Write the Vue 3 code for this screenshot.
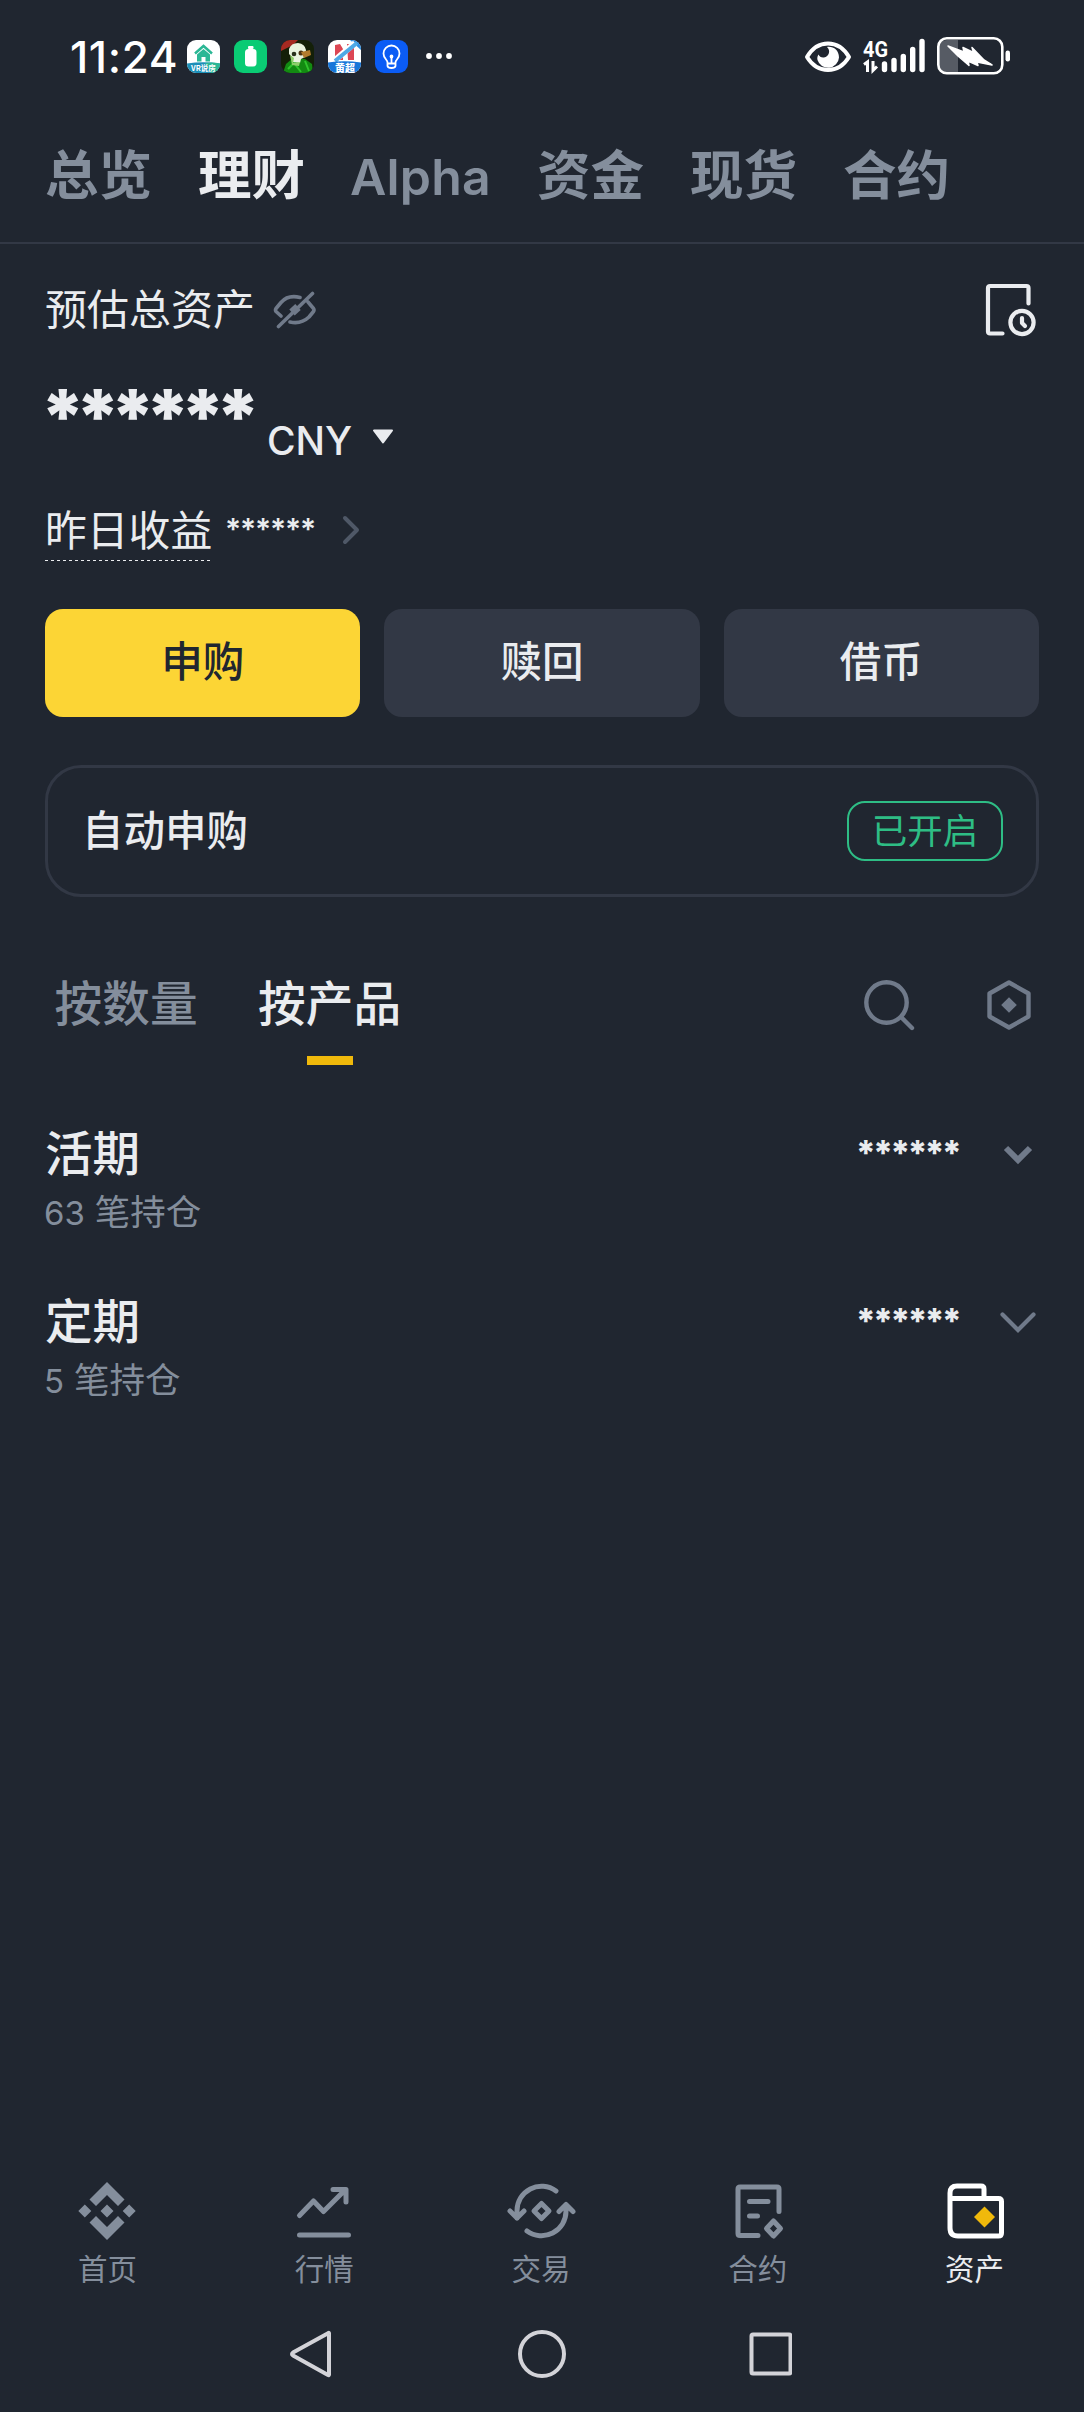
<script setup>
const accountTabs = ['总览', '理财', 'Alpha', '资金', '现货', '合约']
const actions = ['申购', '赎回', '借币']
const holdings = [
  { name: '活期', count: '63', bold: true },
  { name: '定期', count: '5', bold: false },
]
const mask = '******'
</script>

<template>
  <div class="screen">
    <header class="status">
      <span class="time">11:24</span>
      <div class="apps">
        <svg width="33" height="33" viewBox="0 0 33 33">
          <defs><clipPath id="tile"><rect width="33" height="33" rx="9" /></clipPath></defs>
          <g clip-path="url(#tile)">
            <rect width="33" height="33" fill="#fff" />
            <path d="M0 23.500Q16 21 33 23.500V33H0z" fill="#1c8fb8" />
            <path d="M18 23Q26 22 33 23.500V33H24z" fill="#2bb795" />
            <path d="M8 13.500 16.500 6 25 13.500" fill="none" stroke="#2bb795" stroke-width="2.500" />
            <path d="M10 14.500 16.500 9 23 14.500V21.500H18.500V17H14.500V21.500H10z" fill="#2bb795" />
          </g>
          <text x="16.500" y="31" text-anchor="middle" class="tiny">VR说房</text>
        </svg>
        <svg width="33" height="33" viewBox="0 0 33 33">
          <rect width="33" height="33" rx="9" fill="#0acb74" />
          <rect x="14" y="6" width="5.500" height="3" rx="1" fill="#fff" />
          <rect x="11" y="9" width="11.500" height="17.500" rx="3.500" fill="#fff" />
        </svg>
        <svg width="33" height="33" viewBox="0 0 33 33">
          <g clip-path="url(#tile)">
            <rect width="33" height="33" fill="#142008" />
            <path d="M0 0H17L12 5 0 11z" fill="#a52a22" />
            <path d="M2 33 5 24 12 18 24 19 31 24 32 33z" fill="#138a12" />
            <path d="M7 29 13 23 20 32M24 21 28 31" fill="none" stroke="#2fc32c" stroke-width="2" />
            <path d="M8 9Q10 3 17 3 24 4 25 10L24 17 20 19 19 23 12 22 11 17 8 14z" fill="#e9f3df" />
            <path d="M9 15 13 18 12 23 19 22 18 26 11 25z" fill="#8fce6a" />
            <circle cx="13" cy="14" r="2.300" fill="#28301c" /><circle cx="20" cy="13" r="2.500" fill="#4a3214" />
            <path d="M20 12 29 10 30 15 23 18z" fill="#b17b2e" />
          </g>
        </svg>
        <svg width="33" height="33" viewBox="0 0 33 33">
          <g clip-path="url(#tile)">
            <rect width="33" height="33" fill="#fff" />
            <path d="M7 5 12 4 15 9V20H7zM19 4H26V20H20z" fill="#dc4654" />
            <path d="M22 0H33V10z" fill="#2b8de0" />
            <path d="M7 20 27 3" stroke="#fff" stroke-width="6" /><path d="M7 21 29 3" stroke="#4ea9e6" stroke-width="4" />
            <path d="M0 22.500Q16 20 33 22.500V33H0z" fill="#1676d9" />
          </g>
          <text x="17" y="31.500" text-anchor="middle" class="tiny tiny-lg">黄超</text>
        </svg>
        <svg width="33" height="33" viewBox="0 0 33 33" fill="none" stroke="#fff" stroke-width="1.800" stroke-linecap="round">
          <rect width="33" height="33" rx="9" fill="#0b5cf5" stroke="none" />
          <path d="M12.500 22.500C12.500 19.500 8.500 18.500 8.500 13.500A8 8 0 0 1 24.500 13.500C24.500 18.500 20.500 19.500 20.500 22.500M12.500 23.500H20.500V26Q20 28 16.500 28T12.500 26zM16.500 18V23" />
          <circle cx="16.500" cy="16.500" r="1" fill="#fff" />
        </svg>
      </div>
      <svg class="dots" width="28" height="8" viewBox="0 0 28 8" fill="#fff"><circle cx="4" cy="4" r="2.900" /><circle cx="14" cy="4" r="2.900" /><circle cx="24" cy="4" r="2.900" /></svg>
      <svg class="system" width="210" height="44" viewBox="0 0 210 44">
        <path d="M7 23Q15 9.500 28 9.500T49 23Q41 36 28 36T7 23z" fill="none" stroke="#fff" stroke-width="4" stroke-linejoin="round" />
        <path d="M27 13C33 12 39 16 39 23.500A11 11 0 0 1 17.500 26C17 24 17.500 22 18.500 20.500Q20 24 24 23.500C29 22.500 31 16.500 27 13z" fill="#fff" />
        <text x="63" y="22.500" class="net" textLength="25" lengthAdjust="spacingAndGlyphs">4G</text>
        <path d="M64 30.500 67.500 28V38M73 27V36.500L77 32.500" fill="none" stroke="#fff" stroke-width="3" />
        <g stroke="#fff" stroke-width="5.400" stroke-linecap="round"><path d="M84.500 30V35.500M94 26.500V35.500M103.300 22.500V35.500M112.700 15.500V35.500M122 7.500V35.500" /></g>
        <path d="M147 6H158V40H147Q139 40 139 32V14Q139 6 147 6z" fill="#565b64" />
        <rect x="138.300" y="4.300" width="64" height="35" rx="8.500" fill="none" stroke="#fff" stroke-width="2.600" />
        <path d="M148 12 164 18 163 13.500 173.500 18.500 172 13.500 184 26 192 31 177 28 178 31.500 168 27 169 31.500 158 22z" fill="#fff" stroke="#fff" stroke-width="1.500" stroke-linejoin="round" />
        <rect x="205.500" y="16.500" width="4.500" height="11" rx="2.200" fill="#fff" />
      </svg>
    </header>

    <nav class="account-tabs">
      <span v-for="(tab, i) in accountTabs" :key="tab" :class="{ active: i === 1, latin: i === 2 }">{{ tab }}</span>
    </nav>

    <main>
      <section class="summary">
        <div class="estimate">
          <span>预估总资产</span>
          <svg class="eye-off" width="44" height="40" viewBox="0 0 44 40" fill="none" stroke="#707a8a" stroke-width="3.600" stroke-linecap="round" stroke-linejoin="round">
            <path d="M27 7.500Q15 4.500 8 12.500L3 18.500Q2 20 3 21.500L8 26M35 12 40.500 18.500Q41.500 20 40.500 21.500L36 27Q28 34.500 17 32M5.500 36.500 39.500 3.500" />
            <path d="M19 22.500 25 17" stroke-width="8" stroke-linecap="butt" />
          </svg>
          <svg class="history" width="54" height="58" viewBox="0 0 54 58" fill="none" stroke="#eaecef" stroke-width="4.200" stroke-linecap="round" stroke-linejoin="round">
            <path d="M19.500 52.500H7Q5 52.500 5 50.500V7Q5 5 7 5H43.500Q45.500 5 45.500 7V22.500" />
            <circle cx="39" cy="41.500" r="11.600" /><path d="M39 37V42L42 45" />
          </svg>
        </div>
        <div class="balance">
          <span class="stars-big">{{ mask }}</span>
          <span class="currency">CNY</span>
          <svg width="22" height="16" viewBox="0 0 22 16"><path d="M2 1.500H20L11 13.500z" fill="#eaecef" stroke="#eaecef" stroke-width="2" stroke-linejoin="round" /></svg>
        </div>
        <div class="yesterday">
          <span class="dashed">昨日收益</span>
          <span class="stars-small">{{ mask }}</span>
          <svg width="20" height="32" viewBox="0 0 20 32"><path d="M4 4 16 16 4 28" fill="none" stroke="#4f5867" stroke-width="4" stroke-linecap="round" stroke-linejoin="round" /></svg>
        </div>
      </section>

      <div class="actions">
        <button v-for="(a, i) in actions" :key="a" :class="{ primary: i === 0 }">{{ a }}</button>
      </div>

      <div class="auto">
        <span>自动申购</span>
        <span class="badge">已开启</span>
      </div>

      <div class="filters">
        <span class="filter">按数量</span>
        <span class="filter selected">按产品</span>
        <svg class="search" width="56" height="56" viewBox="0 0 56 56" fill="none" stroke="#707a8a" stroke-width="4.400" stroke-linecap="round">
          <circle cx="25.500" cy="25.500" r="20.200" /><path d="M40.500 40.500 51 51" />
        </svg>
        <svg class="hex" width="50" height="56" viewBox="0 0 50 56">
          <path d="M25 5.500 44.500 16.500V39.500L25 50.500 5.500 39.500V16.500z" fill="none" stroke="#707a8a" stroke-width="4.400" stroke-linejoin="round" />
          <path d="M25 20.200 32.800 28 25 35.800 17.200 28z" fill="#707a8a" />
        </svg>
      </div>

      <ul class="holdings">
        <li v-for="h in holdings" :key="h.name">
          <div class="info">
            <strong>{{ h.name }}</strong>
            <small><i>{{ h.count }}</i>笔持仓</small>
          </div>
          <span class="stars-mid">{{ mask }}</span>
          <svg width="40" height="30" viewBox="0 0 40 30" fill="none" stroke="#707a8a">
            <path v-if="h.bold" d="M8 8 20 20 32 8" stroke-width="6" />
            <path v-else d="M4.500 6.500 20 22 35.500 6.500" stroke-width="4.200" stroke-linecap="round" />
          </svg>
        </li>
      </ul>
    </main>

    <footer class="bottom">
      <div class="item">
        <svg width="70" height="70" viewBox="0 0 70 70" fill="#848e9c">
          <path d="M35 6 52.500 23.500 46 30 35 19 24 30 17.500 23.500zM35 64 52.500 46.500 46 40 35 51 24 40 17.500 46.500zM35 28.500 41.500 35 35 41.500 28.500 35zM12.800 28.500 19.300 35 12.800 41.500 6.300 35zM57.200 28.500 63.700 35 57.200 41.500 50.700 35z" />
        </svg>
        <span>首页</span>
      </div>
      <div class="item">
        <svg width="70" height="70" viewBox="0 0 70 70" fill="none" stroke="#848e9c" stroke-width="5" stroke-linecap="round" stroke-linejoin="round">
          <path d="M10.500 59H59.500M10.500 39.500 24.500 25 34.500 35.500 56 14M44 13.500H57V26" />
        </svg>
        <span>行情</span>
      </div>
      <div class="item">
        <svg width="70" height="70" viewBox="0 0 70 70" fill="none" stroke="#848e9c" stroke-width="5" stroke-linecap="round" stroke-linejoin="round">
          <path d="M50 15A24.500 24.500 0 0 0 11 35V42M4 35 11 42 18 35M21 55A24.500 24.500 0 0 0 60 35V29M53 35.500 60 28.500 67 35.500" />
          <path d="M35.500 27.500 43 35 35.500 42.500 28 35z" />
        </svg>
        <span>交易</span>
      </div>
      <div class="item">
        <svg width="70" height="70" viewBox="0 0 70 70" fill="none" stroke="#848e9c" stroke-width="5" stroke-linecap="round" stroke-linejoin="round">
          <path d="M35 59.500H17Q15 59.500 15 57.500V13Q15 11 17 11H54Q56 11 56 13V35.500M26.500 25.500H45M26.500 40H34.500" />
          <path d="M50.500 45 57.500 52.500 50.500 60 43.500 52.500z" />
        </svg>
        <span>合约</span>
      </div>
      <div class="item current">
        <svg width="70" height="70" viewBox="0 0 70 70" fill="none" stroke="#fff" stroke-width="5" stroke-linejoin="round">
          <path d="M10 22.500V17Q10 10 17 10H41Q44 10 44 13V22M10 22.500H58.500Q61.500 22.500 61.500 25.500V57Q61.500 60 58.500 60H18Q10 60 10 52z" />
          <path d="M44.500 30.500 55 41 44.500 51.500 34 41z" fill="#f0b90b" stroke="none" />
        </svg>
        <span>资产</span>
      </div>
    </footer>

    <div class="system-nav">
      <svg width="502" height="50" viewBox="0 0 502 50" fill="none" stroke="#d3d3d8" stroke-width="4" stroke-linejoin="round">
        <path d="M38.500 4Q39 3.500 39 4.500V45.500Q39 46.500 38 46L3 26.500Q1 25 3 23.500z" />
        <circle cx="252" cy="25" r="22" />
        <rect x="461.500" y="5.500" width="39" height="39" rx="1.500" />
      </svg>
    </div>
  </div>
</template>

<style>
body {
  margin: 0;
  background: #202630;
}
</style>

<style scoped>
.screen {
  width: 1084px;
  height: 2412px;
  display: flex;
  flex-direction: column;
  background: #202630;
  color: #eaecef;
  font-family: 'Noto Sans CJK SC', sans-serif;
  overflow: hidden;
}
svg {
  display: block;
  flex: none;
}
.status {
  height: 112px;
  flex: none;
  display: flex;
  align-items: center;
  box-sizing: border-box;
  padding: 0 74px 0 70px;
}
.time {
  width: 117px;
  font: 500 44px/60px Inter, sans-serif;
  letter-spacing: 0.6px;
  margin-top: 2px;
  color: #fff;
}
.apps {
  display: flex;
  gap: 14px;
}
.dots {
  margin-left: 17px;
}
.system {
  margin-left: auto;
}
.tiny {
  font: 700 7.500px 'Noto Sans CJK SC', sans-serif;
  fill: #fff;
}
.tiny-lg {
  font-size: 10px;
  font-weight: 900;
}
.net {
  font: 700 22.500px Roboto, sans-serif;
  fill: #fff;
}
.account-tabs {
  height: 100px;
  flex: none;
  padding: 30px 0 0 45px;
  display: flex;
  gap: 46px;
  border-bottom: 2px solid #323845;
  font-size: 53.500px;
  font-weight: 700;
  line-height: 60px;
  color: #848e9c;
  white-space: nowrap;
}
.account-tabs .active {
  color: #eaecef;
}
.account-tabs .latin {
  width: 141px;
  margin-left: -1px;
  font-family: Inter, sans-serif;
  font-size: 50px;
  font-weight: 600;
  letter-spacing: 0.200px;
  line-height: 70px;
}
main {
  padding: 0 45px;
}
.estimate {
  height: 126px;
  display: flex;
  align-items: center;
  font-size: 42px;
}
.estimate span {
  margin-top: -2px;
}
.eye-off {
  margin: 6px 0 0 18px;
}
.history {
  margin: 6px 2px 0 auto;
}
.balance {
  height: 114px;
  display: flex;
  align-items: flex-start;
}
.stars-big {
  width: 227px;
  font: 900 75px/64px Inter, sans-serif;
  letter-spacing: -10.600px;
  margin: 15px 0 0 -5px;
  white-space: nowrap;
}
.currency {
  width: 105px;
  font: 500 39px/50px Inter, sans-serif;
  margin-top: 46px;
}
.balance svg {
  margin-top: 59px;
}
.yesterday {
  height: 78px;
  display: flex;
  align-items: flex-start;
  margin-top: 16px;
}
.dashed {
  width: 165px;
  height: 61px;
  font-size: 41.800px;
  line-height: 56px;
  white-space: nowrap;
  background: repeating-linear-gradient(90deg, #eaecef 0 3px, transparent 3px 6px) 0 100% / 100% 1px no-repeat;
}
.stars-small {
  width: 116px;
  margin: 12px 0 0 15px;
  font: 600 30px/34px Inter, sans-serif;
  letter-spacing: -1.200px;
}
.yesterday svg {
  margin-top: 14px;
}
.actions {
  display: flex;
  gap: 24px;
  margin-top: 31px;
}
.actions button {
  flex: 1;
  height: 108px;
  padding: 0 0 8px;
  border: 0;
  border-radius: 18px;
  background: #323845;
  color: #eaecef;
  font: 500 41.500px/60px 'Noto Sans CJK SC', sans-serif;
}
.actions .primary {
  background: #fcd535;
  color: #202630;
}
.auto {
  height: 132px;
  box-sizing: border-box;
  margin-top: 48px;
  padding: 0 33px 0 34px;
  display: flex;
  align-items: center;
  justify-content: space-between;
  border: 3px solid #323845;
  border-radius: 36px;
  font-size: 41.500px;
  font-weight: 500;
}
.auto > span:first-child {
  margin-top: -6px;
}
.badge {
  width: 156px;
  height: 60px;
  box-sizing: border-box;
  border: 2px solid #2ebd85;
  border-radius: 18px;
  color: #2ebd85;
  font-size: 35.500px;
  font-weight: 400;
  line-height: 51px;
  text-align: center;
}
.filters {
  height: 128px;
  margin-top: 40px;
  display: flex;
  align-items: center;
  font-size: 47.700px;
  font-weight: 500;
}
.filter {
  height: 128px;
  line-height: 128px;
  margin-left: 9.500px;
  color: #848e9c;
}
.selected {
  margin-left: 60.500px;
  color: #eaecef;
  background: linear-gradient(#f0b90b, #f0b90b) 50% 100% / 46px 9px no-repeat;
}
.search {
  margin: 7px 0 0 auto;
}
.hex {
  margin: 8px 5px 0 67px;
}
.holdings {
  margin: 0;
  padding: 56px 0 0;
  list-style: none;
}
.holdings li {
  height: 167.500px;
  display: flex;
  align-items: flex-start;
}
.info {
  display: flex;
  flex-direction: column;
}
.info strong {
  font-size: 47.500px;
  font-weight: 500;
  line-height: 60px;
}
.info small {
  font-size: 35.500px;
  line-height: 58px;
  color: #848e9c;
}
.info i {
  font: normal 400 33px/1 Inter, sans-serif;
  margin: 0 10px 0 -1px;
}
.stars-mid {
  margin: 12px 39px 0 auto;
  font: 800 34.500px/40px Inter, sans-serif;
  letter-spacing: -2.900px;
}
.holdings svg {
  margin: 19px 1px 0 0;
}
.bottom {
  margin: auto 1px 0 -1px;
  height: 121px;
  flex: none;
  display: grid;
  grid-template-columns: repeat(5, 1fr);
}
.item {
  display: flex;
  flex-direction: column;
  align-items: center;
  font-size: 29.500px;
  line-height: 34px;
  color: #848e9c;
}
.item span {
  margin-top: 4px;
}
.current {
  color: #eaecef;
}
.system-nav {
  height: 115px;
  flex: none;
  display: flex;
  align-items: center;
  box-sizing: border-box;
  padding: 0 0 2px 290px;
}
</style>
